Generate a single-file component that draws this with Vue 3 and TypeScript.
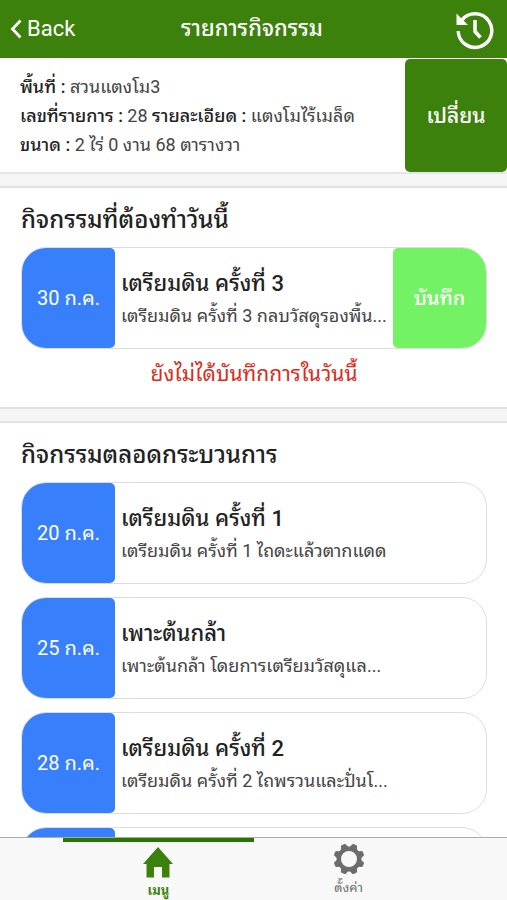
<script setup lang="ts">
interface Activity {
  date: string
  title: string
  detail: string
}

const today: Activity = {
  date: '30 ก.ค.',
  title: 'เตรียมดิน ครั้งที่ 3',
  detail: 'เตรียมดิน ครั้งที่ 3 กลบวัสดุรองพื้น...',
}

const activities: Activity[] = [
  { date: '20 ก.ค.', title: 'เตรียมดิน ครั้งที่ 1', detail: 'เตรียมดิน ครั้งที่ 1 ไถดะแล้วตากแดด' },
  { date: '25 ก.ค.', title: 'เพาะต้นกล้า', detail: 'เพาะต้นกล้า โดยการเตรียมวัสดุแล...' },
  { date: '28 ก.ค.', title: 'เตรียมดิน ครั้งที่ 2', detail: 'เตรียมดิน ครั้งที่ 2 ไถพรวนและปั่นโ...' },
  { date: '', title: '', detail: '' },
]

const teeth: number[] = [22.5, 67.5, 112.5, 157.5, 202.5, 247.5, 292.5, 337.5]
</script>

<template>
  <div class="app">
    <header class="bar">
      <button class="back" type="button">
        <svg width="12" height="20" viewBox="0 0 12 20" aria-hidden="true">
          <path d="M10.500 1.500 2.500 10 10.500 18.500" fill="none" stroke="currentColor" stroke-width="2.800" />
        </svg>
        <span>Back</span>
      </button>
      <h1>รายการกิจกรรม</h1>
      <button class="history" type="button" aria-label="ประวัติ">
        <svg width="38" height="42" viewBox="0 0 38 42" aria-hidden="true">
          <path d="M6.100 11.800A16.800 16.800 0 1 1 2.200 23" fill="none" stroke="currentColor" stroke-width="3.400" />
          <path d="M.5 5.500v11.500h11.500Z" fill="currentColor" />
          <path d="M19 12v11.500l5.500 6" fill="none" stroke="currentColor" stroke-width="3.600" />
        </svg>
      </button>
    </header>

    <main class="content">
      <section class="info">
        <div class="lines">
          <p><b>พื้นที่ :</b> สวนแตงโม3</p>
          <p><b>เลขที่รายการ :</b> 28 <b>รายละเอียด :</b> แตงโมไร้เมล็ด</p>
          <p><b>ขนาด :</b> 2 ไร่ 0 งาน 68 ตารางวา</p>
        </div>
        <button class="change" type="button">เปลี่ยน</button>
      </section>

      <section class="panel">
        <h2>กิจกรรมที่ต้องทำวันนี้</h2>
        <article class="item">
          <div class="date">{{ today.date }}</div>
          <div class="text">
            <h3>{{ today.title }}</h3>
            <p>{{ today.detail }}</p>
          </div>
          <button class="save" type="button">บันทึก</button>
        </article>
        <p class="notice">ยังไม่ได้บันทึกการในวันนี้</p>
      </section>

      <section class="panel">
        <h2>กิจกรรมตลอดกระบวนการ</h2>
        <div class="list">
          <article v-for="(a, i) in activities" :key="i" class="item">
            <div class="date">{{ a.date }}</div>
            <div class="text">
              <h3>{{ a.title }}</h3>
              <p>{{ a.detail }}</p>
            </div>
          </article>
        </div>
      </section>
    </main>

    <nav class="tabs">
      <a class="tab active" href="#menu">
        <svg width="32" height="32" viewBox="0 0 32 32" aria-hidden="true">
          <path d="M16 1 31 18h-3.500v13.500h-7.500V21h-8v10.500H4.500V18H1Z" fill="currentColor" />
        </svg>
        <span>เมนู</span>
      </a>
      <a class="tab" href="#settings">
        <svg width="32" height="32" viewBox="-16 -16 32 32" aria-hidden="true">
          <circle r="10.200" fill="none" stroke="currentColor" stroke-width="4.400" />
          <path
            v-for="t in teeth"
            :key="t"
            :transform="`rotate(${t})`"
            d="M-4.600-10.500Q-3.200-12-2.800-14.400Q-2.500-15.500-1.500-15.500H1.500Q2.500-15.500 2.800-14.400Q3.200-12 4.600-10.500Z"
            fill="currentColor"
          />
        </svg>
        <span>ตั้งค่า</span>
      </a>
    </nav>
  </div>
</template>

<style>
body {
  margin: 0;
}
</style>

<style scoped>
.app {
  display: flex;
  flex-direction: column;
  height: 100vh;
  overflow: hidden;
  background: #f5f5f5;
  color: #222;
  font-family: Roboto, 'Noto Sans Thai Looped', 'Noto Sans Thai', 'Noto Sans', sans-serif;
  line-height: 30px;
}
h1, h2, h3, p {
  margin: 0;
}
button {
  border: 0;
  padding: 0;
  font: inherit;
  color: #fff;
  cursor: pointer;
}
.bar {
  flex: none;
  display: grid;
  grid-template-columns: 1fr auto 1fr;
  align-items: center;
  height: 58px;
  padding: 0 13px 0 10px;
  background: #3c810b;
  color: #fff;
}
.back {
  display: flex;
  align-items: center;
  gap: 5px;
  justify-self: start;
  background: none;
  font-size: 22px;
}
h1 {
  font-size: 22px;
  font-weight: 500;
}
.history {
  display: flex;
  justify-self: end;
  background: none;
}
.content {
  flex: 1;
  min-height: 0;
  overflow: hidden;
  display: flex;
  flex-direction: column;
  gap: 12px;
}
.info {
  flex: none;
  display: flex;
  background: #fff;
  border-bottom: 2px solid #e5e5e5;
}
.lines {
  flex: 1;
  padding: 14px 0 13px 20px;
  font-size: 18px;
  line-height: 29px;
  white-space: nowrap;
  color: #444;
}
.lines b {
  font-weight: 500;
  color: #222;
}
.change {
  width: 102px;
  margin-top: 1px;
  border-radius: 5px;
  background: #3c810b;
  font-size: 21px;
  font-weight: 500;
}
.panel {
  flex: none;
  padding: 14px 20px 16px 21px;
  background: #fff;
  border-top: 2px solid #e2e2e2;
  border-bottom: 2px solid #e2e2e2;
}
h2 {
  font-size: 24px;
  font-weight: 500;
  line-height: 36px;
  margin-bottom: 9px;
}
.list {
  display: flex;
  flex-direction: column;
  gap: 13px;
}
.item {
  box-sizing: border-box;
  display: flex;
  height: 102px;
  border: 1px solid #ddd;
  border-radius: 25px;
  overflow: hidden;
}
.date {
  flex: none;
  display: flex;
  align-items: center;
  justify-content: center;
  width: 93px;
  border-radius: 0 5px 5px 0;
  background: #387ffc;
  color: #fff;
  font-size: 20px;
}
.text {
  flex: 1;
  min-width: 0;
  padding: 20px 0 0 6px;
  white-space: nowrap;
}
h3 {
  font-size: 22px;
  font-weight: 500;
  line-height: 32px;
}
.text p {
  font-size: 18px;
  line-height: 32px;
  color: #444;
}
.save {
  flex: none;
  width: 93px;
  border-radius: 5px 0 0 5px;
  background: #73f363;
  font-size: 20px;
  font-weight: 500;
}
.notice {
  margin-top: 8px;
  text-align: center;
  font-size: 21px;
  line-height: 34px;
  color: #dc2a1b;
}
.tabs {
  flex: none;
  display: flex;
  justify-content: center;
  height: 62px;
  border-top: 1px solid #aaa;
  background: #f8f8f8;
}
.tab {
  display: flex;
  flex-direction: column;
  align-items: center;
  width: 37.5%;
  padding-top: 5px;
  font-size: 13px;
  line-height: 26px;
  color: #6c6c6c;
  text-decoration: none;
}
.tab.active {
  padding-top: 8px;
  box-shadow: inset 0 4px #287500;
  color: #3c810b;
  font-weight: 700;
}
.tab svg {
  flex: none;
}
</style>
